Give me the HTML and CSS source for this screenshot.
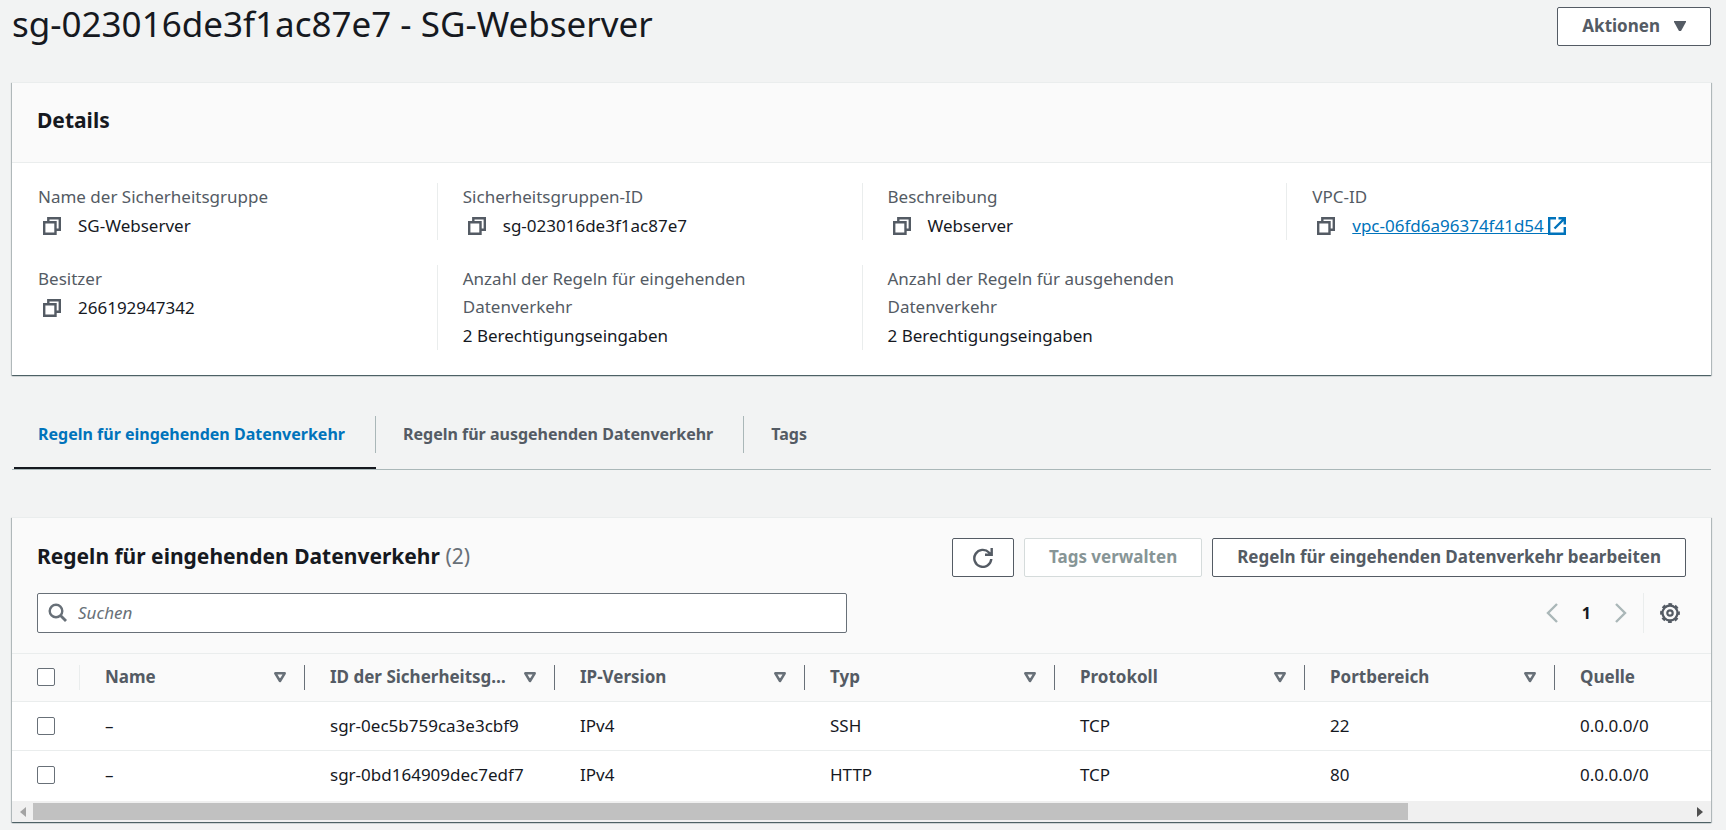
FILE: index.html
```html
<!DOCTYPE html>
<html lang="de">
<head>
<meta charset="utf-8">
<meta name="viewport" content="width=device-width, initial-scale=1">
<title>sg-023016de3f1ac87e7 - SG-Webserver</title>
<link rel="stylesheet" href="styles.css">
</head>
<body>
<svg class="sprite" aria-hidden="true">
  <symbol id="icon-copy" viewBox="0 0 18 18"><path d="M1.200 5.200h11.300v11.600H1.200zM5.300 5V1.200h11.500v11.500h-4" fill="none" stroke="currentColor" stroke-width="2.400"/></symbol>
  <symbol id="icon-external" viewBox="0 0 18 18"><path d="M8 1.200H1.200v15.600h15.600V10M10.500 1.200h6.300v6.300M16.500 1.500L6.500 11.500" fill="none" stroke="currentColor" stroke-width="2.400"/></symbol>
  <symbol id="icon-filter" viewBox="0 0 12 11"><path d="M1.300 1.300h9.400L6 9z" fill="none" stroke="currentColor" stroke-width="2.500" stroke-linejoin="round"/></symbol>
</svg>
<main class="page">
  <header class="page-header">
    <h1 class="page-title">sg-023016de3f1ac87e7 - SG-Webserver</h1>
    <button class="button" type="button">Aktionen
      <svg class="caret" viewBox="0 0 12 10" aria-hidden="true"><path d="M0 0h12v1L7 10H5L0 1z" fill="currentColor"/></svg>
    </button>
  </header>

  <section class="card">
    <div class="details-header"><h2 class="card-title">Details</h2></div>
    <dl class="details">
      <div class="field"><dt>Name der Sicherheitsgruppe</dt><dd><button class="copy" type="button" aria-label="Kopieren"><svg class="icon"><use href="#icon-copy"/></svg></button>SG-Webserver</dd></div>
      <div class="field"><dt>Sicherheitsgruppen-ID</dt><dd><button class="copy" type="button" aria-label="Kopieren"><svg class="icon"><use href="#icon-copy"/></svg></button>sg-023016de3f1ac87e7</dd></div>
      <div class="field"><dt>Beschreibung</dt><dd><button class="copy" type="button" aria-label="Kopieren"><svg class="icon"><use href="#icon-copy"/></svg></button>Webserver</dd></div>
      <div class="field"><dt>VPC-ID</dt><dd><button class="copy" type="button" aria-label="Kopieren"><svg class="icon"><use href="#icon-copy"/></svg></button><a class="link" href="#vpc">vpc-06fd6a96374f41d54&nbsp;<svg class="icon icon-inline"><use href="#icon-external"/></svg></a></dd></div>
      <div class="field"><dt>Besitzer</dt><dd><button class="copy" type="button" aria-label="Kopieren"><svg class="icon"><use href="#icon-copy"/></svg></button>266192947342</dd></div>
      <div class="field"><dt>Anzahl der Regeln für eingehenden Datenverkehr</dt><dd>2 Berechtigungseingaben</dd></div>
      <div class="field"><dt>Anzahl der Regeln für ausgehenden Datenverkehr</dt><dd>2 Berechtigungseingaben</dd></div>
    </dl>
  </section>

  <nav class="tabs">
    <a class="tab tab-active" href="#inbound"><span class="tab-label">Regeln für eingehenden Datenverkehr</span></a>
    <a class="tab" href="#outbound"><span class="tab-label">Regeln für ausgehenden Datenverkehr</span></a>
    <a class="tab" href="#tags"><span class="tab-label">Tags</span></a>
  </nav>

  <section class="card" id="inbound">
    <div class="rules-header">
      <div class="rules-top">
        <h2 class="card-title rules-title">Regeln für eingehenden Datenverkehr <span class="count">(2)</span></h2>
        <div class="actions">
          <button class="button button-icon" type="button" aria-label="Aktualisieren"><svg class="icon-refresh" viewBox="0 0 20 20" aria-hidden="true"><path d="M18.300 11a8.500 8.500 0 1 1-2.300-6.500l2 2M18.700 0v6.700H12" fill="none" stroke="currentColor" stroke-width="2.400"/></svg></button>
          <button class="button" type="button" disabled>Tags verwalten</button>
          <button class="button" type="button">Regeln für eingehenden Datenverkehr bearbeiten</button>
        </div>
      </div>
      <div class="rules-tools">
        <label class="search">
          <svg class="icon-search" viewBox="0 0 20 20" aria-hidden="true"><circle cx="8" cy="8" r="6.300" fill="none" stroke="currentColor" stroke-width="2.400"/><path d="M12.500 12.500l5.500 5.500" stroke="currentColor" stroke-width="2.800"/></svg>
          <input class="search-input" type="search" placeholder="Suchen" aria-label="Suchen">
        </label>
        <div class="pager">
          <button class="page-button" type="button" aria-label="Vorherige Seite" disabled><svg class="chevron" viewBox="0 0 12 20"><path d="M11 1L2 10l9 9" fill="none" stroke="currentColor" stroke-width="2.400"/></svg></button>
          <button class="page-number" type="button">1</button>
          <button class="page-button" type="button" aria-label="Nächste Seite" disabled><svg class="chevron" viewBox="0 0 12 20"><path d="M1 1l9 9-9 9" fill="none" stroke="currentColor" stroke-width="2.400"/></svg></button>
          <button class="settings" type="button" aria-label="Einstellungen"><svg class="icon-gear" viewBox="0 0 20 20" fill="none" stroke="currentColor"><circle cx="10" cy="10" r="7.500" stroke-width="2.300"/><circle cx="10" cy="10" r="8.910" stroke-width="2" stroke-dasharray="3.800 3.200" stroke-dashoffset="1.900"/><circle cx="10" cy="10" r="2.700" stroke-width="2.200"/></svg></button>
        </div>
      </div>
    </div>
    <div class="table-wrap">
      <table class="rules">
        <colgroup><col class="col-check"><col class="col-name"><col class="col"><col class="col"><col class="col"><col class="col"><col class="col"><col class="col"></colgroup>
        <thead>
          <tr>
            <th><div class="head head-check"><input class="check" type="checkbox" aria-label="Alle auswählen"></div></th>
            <th><div class="head"><span class="head-text">Name</span><svg class="filter"><use href="#icon-filter"/></svg></div></th>
            <th><div class="head"><span class="head-text">ID der Sicherheitsg…</span><svg class="filter"><use href="#icon-filter"/></svg></div></th>
            <th><div class="head"><span class="head-text">IP-Version</span><svg class="filter"><use href="#icon-filter"/></svg></div></th>
            <th><div class="head"><span class="head-text">Typ</span><svg class="filter"><use href="#icon-filter"/></svg></div></th>
            <th><div class="head"><span class="head-text">Protokoll</span><svg class="filter"><use href="#icon-filter"/></svg></div></th>
            <th><div class="head"><span class="head-text">Portbereich</span><svg class="filter"><use href="#icon-filter"/></svg></div></th>
            <th><div class="head"><span class="head-text">Quelle</span></div></th>
          </tr>
        </thead>
        <tbody>
          <tr><td><input class="check" type="checkbox" aria-label="sgr-0ec5b759ca3e3cbf9 auswählen"></td><td>–</td><td>sgr-0ec5b759ca3e3cbf9</td><td>IPv4</td><td>SSH</td><td>TCP</td><td>22</td><td>0.0.0.0/0</td></tr>
          <tr><td><input class="check" type="checkbox" aria-label="sgr-0bd164909dec7edf7 auswählen"></td><td>–</td><td>sgr-0bd164909dec7edf7</td><td>IPv4</td><td>HTTP</td><td>TCP</td><td>80</td><td>0.0.0.0/0</td></tr>
        </tbody>
      </table>
    </div>
    <div class="scrollbar" aria-hidden="true">
      <svg class="arrow arrow-off" viewBox="0 0 6 10"><path d="M6 0v10L0 5z" fill="currentColor"/></svg>
      <div class="track"><div class="thumb"></div></div>
      <svg class="arrow" viewBox="0 0 6 10"><path d="M0 0v10l6-5z" fill="currentColor"/></svg>
    </div>
  </section>
</main>
</body>
</html>
```
FILE: styles.css
```css
* { box-sizing: border-box; }

body {
  margin: 0;
  background: #f2f3f3;
  color: #16191f;
  font: 17px/28px "Noto Sans", "Open Sans", sans-serif;
}

button, input { font: inherit; color: inherit; }
h1, h2, dl, dd { margin: 0; }
.sprite { position: absolute; width: 0; height: 0; }

.page { padding: 0 15px 8px 12px; }

.page-header {
  display: flex;
  justify-content: space-between;
  align-items: flex-start;
  height: 82px;
  padding: 4px 0 0;
}
.page-title { font-size: 35px; line-height: 40px; font-weight: 400; }
.page-header .button { margin-top: 3px; }

.button {
  display: inline-flex;
  align-items: center;
  gap: 14px;
  height: 39px;
  padding: 0 24px 2px;
  border: 1px solid #545b64;
  border-radius: 2px;
  background: #fff;
  color: #545b64;
  font-weight: 700;
  white-space: nowrap;
}
.button:disabled { border-color: #d5dbdb; color: #879596; }
.button-icon { padding: 0 20px; }
.caret { width: 12px; height: 10px; }
.icon-refresh { width: 20px; height: 20px; }

.card {
  background: #fff;
  border-top: 1px solid #eaeded;
  box-shadow: 0 1px 1px rgba(0, 28, 36, .5), 1px 1px 1px rgba(0, 28, 36, .2), -1px 1px 1px rgba(0, 28, 36, .2);
}
.card-title { font-size: 21px; line-height: 28px; font-weight: 700; }
.count { font-weight: 400; color: #687078; }

.details-header { padding: 23px 25px 28px; background: #fafafa; border-bottom: 1px solid #eaeded; }
.details {
  display: grid;
  grid-template-columns: repeat(4, 1fr);
  row-gap: 25px;
  padding: 20px 0 25px;
}
.field { padding: 0 25px; border-left: 1px solid #eaeded; }
.field:nth-child(4n + 1) { border-left-color: transparent; }
.field dt { color: #545b64; max-width: 300px; }
.field dd { display: flex; align-items: center; margin-top: 1px; }
.copy {
  display: flex;
  padding: 0 17px 0 5px;
  border: 0;
  background: none;
  color: #545b64;
}
.icon { width: 18px; height: 18px; flex: none; }
.icon-inline { vertical-align: -3px; }
.link { color: #0073bb; text-decoration: underline; }

.tabs {
  display: flex;
  margin: 41px 0 47px;
  padding-left: 2px;
  border-bottom: 1px solid #aab7b8;
  font-size: 16px;
}
.tab {
  padding-bottom: 14px;
  border-bottom: 2px solid transparent;
  color: #545b64;
  font-weight: 700;
  text-decoration: none;
}
.tab-label { display: block; padding: 4px 30px 5px 24px; border-right: 1px solid #aab7b8; }
.tab:last-child .tab-label { border-right: 0; }
.tab + .tab .tab-label { padding-left: 27px; }
.tab-active { color: #0073bb; border-bottom-color: #16191f; }

.rules-header { padding: 20px 25px; background: #fafafa; border-bottom: 1px solid #eaeded; }
.rules-top, .rules-tools, .actions, .pager { display: flex; align-items: center; }
.rules-top, .rules-tools { justify-content: space-between; }
.rules-top { align-items: flex-start; }
.rules-title { line-height: 36px; }
.actions { gap: 10px; }
.rules-tools { margin-top: 16px; }

.search {
  display: flex;
  align-items: center;
  width: 810px;
  height: 40px;
  padding-left: 10px;
  border: 1px solid #687078;
  border-radius: 2px;
  background: #fff;
  color: #687078;
}
.icon-search { width: 20px; height: 20px; }
.search-input { flex: 1; margin-left: 8px; padding: 0 2px; border: 0; outline: 0; background: none; }
.search-input::placeholder { color: #687078; font-style: italic; opacity: 1; }

.page-button, .page-number, .settings { display: flex; padding: 0; border: 0; background: none; }
.page-button { color: #aab7b8; }
.page-number { margin: 0 24px; font-size: 16px; font-weight: 700; }
.chevron { width: 12px; height: 20px; }
.settings {
  align-items: center;
  height: 40px;
  margin-left: 16px;
  padding: 0 6px 0 16px;
  border-left: 1px solid #eaeded;
  color: #545b64;
}
.icon-gear { width: 20px; height: 20px; }

.table-wrap { overflow-x: auto; scrollbar-width: none; }
.rules { width: 1793px; table-layout: fixed; border-collapse: collapse; }
.col-check { width: 68px; }
.col-name { width: 225px; }
.col { width: 250px; }
.rules th { height: 47px; padding: 0; background: #fafafa; border-bottom: 1px solid #eaeded; text-align: left; }
.rules td { height: 49px; padding: 0 25px; border-bottom: 1px solid #eaeded; }
.rules tbody tr:last-child td { height: 51px; padding-bottom: 2px; border-bottom: 0; }
.head {
  display: flex;
  align-items: center;
  justify-content: space-between;
  height: 25px;
  padding: 0 18px 0 25px;
  border-right: 1px solid #687078;
  color: #545b64;
}
.head-check { border-right-color: #eaeded; }
.head-text { white-space: nowrap; }
.filter { width: 12px; height: 11px; flex: none; color: #687078; }
.check {
  appearance: none;
  display: block;
  width: 18px;
  height: 18px;
  margin: 0;
  border: 1px solid #687078;
  border-radius: 2px;
  background: #fff;
}

.scrollbar { display: flex; align-items: center; height: 21px; padding: 0 8px; background: #f0f0f0; color: #505050; }
.arrow { width: 6px; height: 10px; flex: none; }
.arrow-off { color: #a3a3a3; }
.track { flex: 1; margin: 0 7px; }
.thumb { width: 83%; height: 17px; background: #c1c1c1; }
```
